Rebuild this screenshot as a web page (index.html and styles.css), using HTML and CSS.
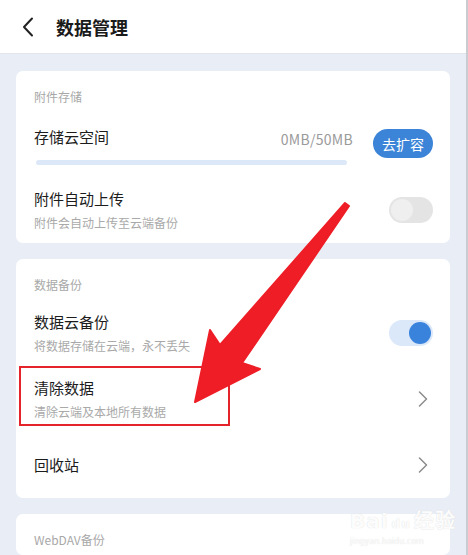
FILE: index.html
```html
<!DOCTYPE html>
<html lang="zh-CN">
<head>
    <meta charset="UTF-8">
    <meta name="viewport" content="width=device-width, initial-scale=1.0">
    <title>数据管理</title>
    <link rel="stylesheet" href="styles.css">
</head>
<body>
    <div class="screen">
        <header class="topbar">
            <svg class="back" width="12" height="20" viewBox="0 0 12 20">
                <path d="M10 1.5 L2 10 L10 18.5" fill="none" stroke="#222" stroke-width="2" stroke-linecap="round" stroke-linejoin="round"/>
            </svg>
            <h1 class="title">数据管理</h1>
        </header>

        <main class="content">
            <section class="card">
                <div class="card-label">附件存储</div>
                <div class="row storage">
                    <div class="storage-info">
                        <div class="storage-head">
                            <span class="row-title">存储云空间</span>
                            <span class="usage">0MB/50MB</span>
                        </div>
                        <div class="bar"><div class="bar-fill" style="width: 0%"></div></div>
                    </div>
                    <button class="expand">去扩容</button>
                </div>
                <div class="row">
                    <div class="row-text">
                        <div class="row-title">附件自动上传</div>
                        <div class="row-sub">附件会自动上传至云端备份</div>
                    </div>
                    <span class="switch"></span>
                </div>
            </section>

            <section class="card">
                <div class="card-label">数据备份</div>
                <div class="row">
                    <div class="row-text">
                        <div class="row-title">数据云备份</div>
                        <div class="row-sub">将数据存储在云端，永不丢失</div>
                    </div>
                    <span class="switch on"></span>
                </div>
                <div class="row">
                    <div class="row-text">
                        <div class="row-title">清除数据</div>
                        <div class="row-sub">清除云端及本地所有数据</div>
                    </div>
                    <svg class="chevron" width="10" height="16" viewBox="0 0 10 16">
                        <path d="M1.5 1 L8.5 8 L1.5 15" fill="none" stroke="#8c8c8c" stroke-width="1.5" stroke-linecap="round" stroke-linejoin="round"/>
                    </svg>
                    <div class="highlight"></div>
                </div>
                <div class="row">
                    <div class="row-text">
                        <div class="row-title">回收站</div>
                    </div>
                    <svg class="chevron" width="10" height="16" viewBox="0 0 10 16">
                        <path d="M1.5 1 L8.5 8 L1.5 15" fill="none" stroke="#8c8c8c" stroke-width="1.5" stroke-linecap="round" stroke-linejoin="round"/>
                    </svg>
                </div>
            </section>

            <section class="card">
                <div class="card-label">WebDAV备份</div>
            </section>
        </main>

        <!-- annotation arrow -->
        <svg class="arrow" width="468" height="555" viewBox="0 0 468 555">
            <polygon points="345,203 349,206 242,363 260,369 195,402 210,330 220,345" fill="#ee1d26" stroke="#ee1d26" stroke-width="2" stroke-linejoin="round"/>
        </svg>

        <div class="watermark">
            <div class="wm-top">Bai<span class="wm-du">du</span>经验</div>
            <div class="wm-url">jingyan.baidu.com</div>
        </div>
    </div>
</body>
</html>
```

FILE: styles.css
```css
body {
    margin: 0;
    font-family: "Noto Sans CJK SC", "Noto Sans", sans-serif;
    background-color: #fff;
}
.screen {
    position: relative;
    width: 466px;
    height: 555px;
    overflow: hidden;
    background-color: #e9eef6;
    border-right: 2px solid #c9ccd1;
}
.topbar {
    display: flex;
    align-items: center;
    height: 53px;
    background-color: #fff;
    border-bottom: 1px solid #e2e5ea;
    padding-left: 22px;
}
.back {
    display: block;
}
.title {
    margin: 0 0 0 22px;
    font-size: 18px;
    font-weight: 700;
    color: #1a1a1a;
    line-height: 24px;
}
.content {
    display: flex;
    flex-direction: column;
    gap: 16px;
    padding: 17px 16px 0;
}
.card {
    background-color: #fff;
    border-radius: 7px;
}
.card-label {
    padding: 18px 18px 7px;
    font-size: 12px;
    line-height: 16px;
    color: #a8a8a8;
}
.row {
    position: relative;
    display: flex;
    align-items: center;
    height: 66px;
    padding: 0 17px 0 18px;
}
.row-text {
    flex: 1;
}
.row-title {
    font-size: 15px;
    line-height: 22px;
    color: #1c1c1c;
}
.row-sub {
    margin-top: 4px;
    font-size: 12px;
    line-height: 18px;
    color: #a9a9a9;
}
.storage {
    height: 65px;
}
.storage-info {
    flex: 1;
    padding-top: 1px;
}
.storage-head {
    display: flex;
    justify-content: space-between;
    align-items: center;
}
.usage {
    font-size: 14px;
    letter-spacing: 0.3px;
    color: #9a9a9a;
    padding-top: 3px;
    margin-right: -3px;
}
.bar {
    margin: 11px 3px 0 2px;
    height: 5px;
    border-radius: 3px;
    background-color: #dce8f7;
    overflow: hidden;
}
.bar-fill {
    height: 100%;
    background-color: #3b84d8;
}
.expand {
    margin-left: 23px;
    width: 60px;
    height: 29px;
    border: none;
    border-radius: 15px;
    background-color: #3b84d8;
    color: #fff;
    font-family: inherit;
    font-size: 14px;
    padding: 0;
    margin-top: -2px;
}
.switch {
    position: relative;
    width: 44px;
    height: 26px;
    border-radius: 13px;
    background-color: #e4e4e4;
}
.switch::after {
    content: "";
    position: absolute;
    top: 2px;
    left: 2px;
    width: 22px;
    height: 22px;
    border-radius: 50%;
    background-color: #efefef;
}
.switch.on {
    background-color: #dbe8f9;
}
.switch.on::after {
    left: 20px;
    background-color: #3a83dc;
}
.chevron {
    display: block;
    margin-right: 5px;
}
.highlight {
    position: absolute;
    left: 3px;
    top: 0;
    width: 211px;
    height: 60px;
    border: 2px solid #e4232a;
    box-sizing: border-box;
}
.arrow {
    position: absolute;
    top: 0;
    left: 0;
    pointer-events: none;
}
.watermark {
    position: absolute;
    left: 350px;
    top: 510px;
    font-family: "DejaVu Sans", sans-serif;
    color: rgba(255, 255, 255, 0.95);
    text-shadow: 0 0 1px #d4d4d4;
}
.wm-top {
    font-size: 20px;
    font-weight: 700;
    line-height: 22px;
    letter-spacing: 1px;
}
.wm-du {
    font-size: 12px;
    margin: 0 3px;
}
.wm-url {
    font-size: 8px;
    line-height: 10px;
    margin-top: 2px;
}
```
